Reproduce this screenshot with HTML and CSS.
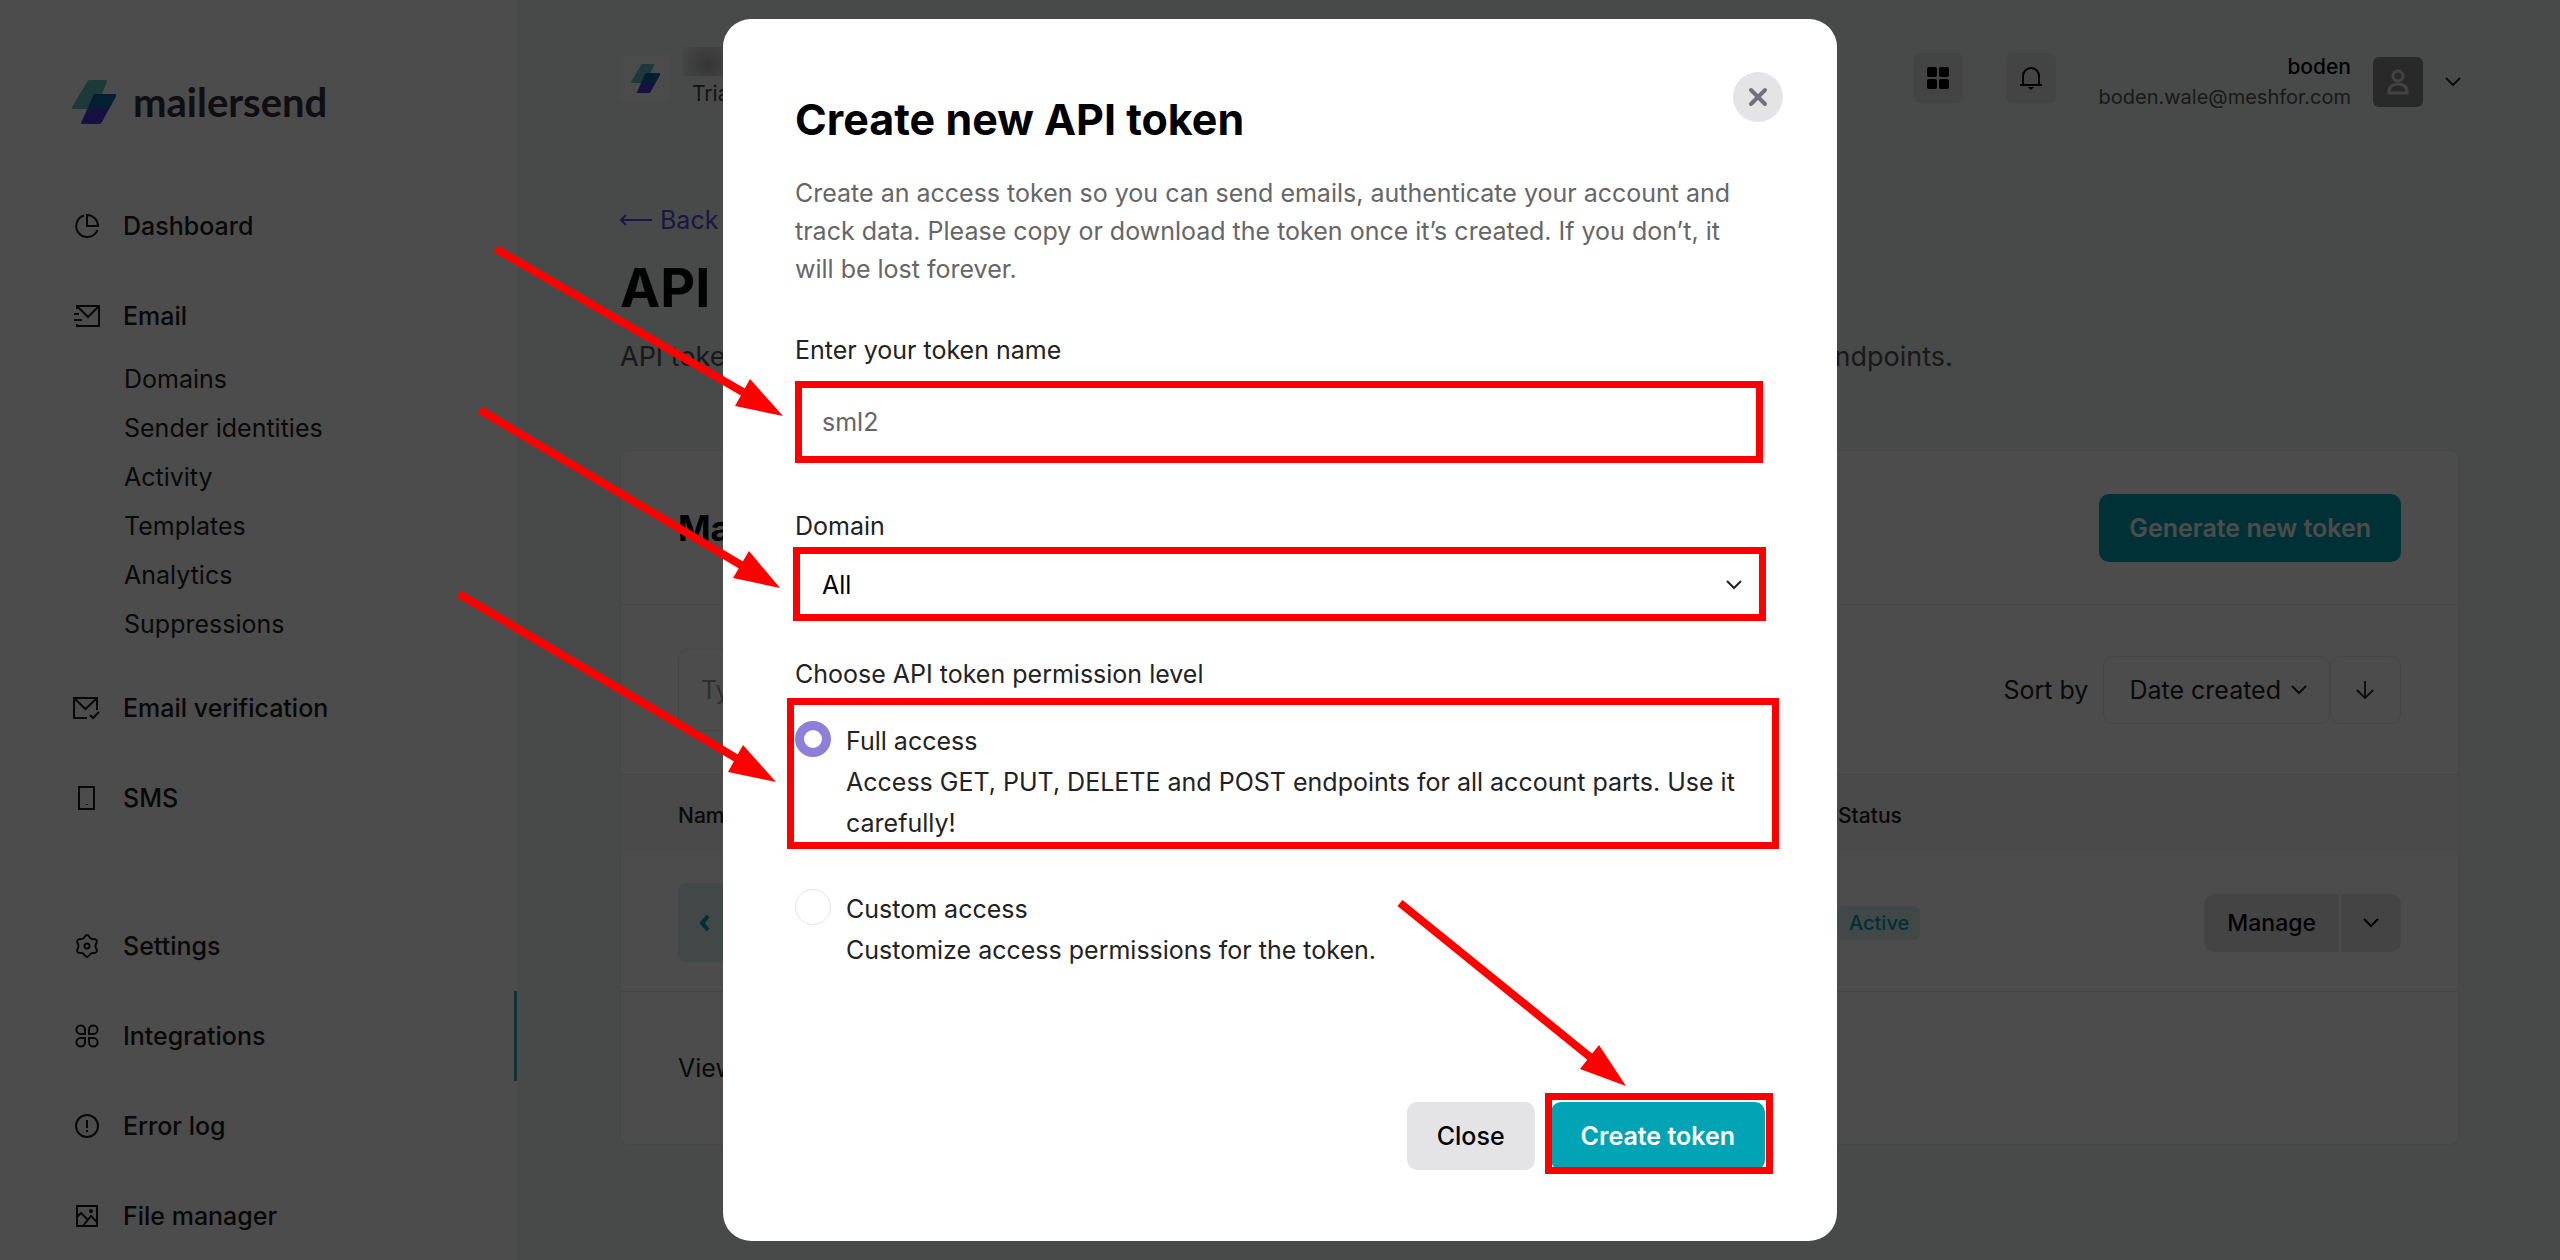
FILE: index.html
```html
<!DOCTYPE html>
<html lang="en">

    <head>

        <meta charset="UTF-8">
        <meta name="viewport" content="width=device-width, initial-scale=1.0">
        <title>API tokens | MailerSend</title>

        <link rel="stylesheet" href="styles.css">

    </head>

    <body>

        <!-- shapes used more than once -->
        <svg class="sprite" aria-hidden="true">
            <symbol id="logo" viewBox="0 0 44 44">
                <path fill="#62c0c4" d="M15 2Q16 0 18 0H34Q35 0 35 2L23 29H1Q0 29 0 27Z" />
                <path fill="#4a3adb" d="M9 43L22 14H43Q44 14 44 16L30 42Q29 44 27 44H10Q9 44 9 43Z" />
                <path fill="#0f69a8" d="M16 29L22 16Q23 14 25 14H43Q44 14 44 16L37 29Z" />
            </symbol>
            <symbol id="chevron" viewBox="0 0 16 10">
                <path d="M1 1l7 7 7-7" fill="none" stroke="currentColor" stroke-width="2" />
            </symbol>
        </svg>

        <div class="app">

            <aside class="sidebar">

                <a class="brand" href="#">
                    <svg class="brand-logo"><use href="#logo" /></svg>
                    <span>mailersend</span>
                </a>

                <nav class="nav">

                    <a class="nav-item" href="#">
                        <svg class="icon" viewBox="0 0 24 24"><path d="M9 1.5A11 11 0 1 0 22.5 16M12 1v11h11A11 11 0 0 0 12 1z" /></svg>
                        Dashboard
                    </a>
                    <a class="nav-item" href="#">
                        <svg class="icon" viewBox="0 0 24 24"><path d="M2 5V2h22v20H2v-2M2 2l11 11L24 2M-1 10h5M-1 16h8" /></svg>
                        Email
                    </a>

                    <div class="subnav">
                        <a href="#">Domains</a>
                        <a href="#">Sender identities</a>
                        <a href="#">Activity</a>
                        <a href="#">Templates</a>
                        <a href="#">Analytics</a>
                        <a href="#">Suppressions</a>
                    </div>

                    <a class="nav-item" href="#">
                        <svg class="icon" viewBox="0 0 24 24"><path d="M22 14V2H-1v20h13M-1 2l11.5 11L22 2M15 19l3 3 6-6" /></svg>
                        Email verification
                    </a>
                    <a class="nav-item" href="#">
                        <svg class="icon" viewBox="0 0 24 24"><path d="M4 1h15v22H4zM12 18v1" /></svg>
                        SMS
                    </a>

                    <a class="nav-item nav-item-split" href="#">
                        <svg class="icon" viewBox="0 0 24 24"><path d="M12 1c2 0 2.5 3 4 3.7s4-.7 5.500 1.3-1 3.5-1 6 2.5 4 1 6-4 .6-5.500 1.3S14 23 12 23s-2.5-3-4-3.7-4 .7-5.500-1.3 1-3.5 1-6-2.5-4-1-6 4-.6 5.500-1.3S10 1 12 1z" /><circle cx="12" cy="12" r="2.5" /></svg>
                        Settings
                    </a>
                    <a class="nav-item active" href="#">
                        <svg class="icon" viewBox="0 0 24 24"><path d="M10 10V5.5A4.300 4.300 0 1 0 5.5 10zM14 10V5.5A4.300 4.300 0 1 1 18.5 10zM10 14v4.5A4.300 4.300 0 1 1 5.5 14zM14 14v4.5a4.300 4.300 0 1 0 4.5-4.5z" /></svg>
                        Integrations
                    </a>
                    <a class="nav-item" href="#">
                        <svg class="icon" viewBox="0 0 24 24"><circle cx="12" cy="12" r="11" /><path d="M12 6v8M12 16v2" /></svg>
                        Error log
                    </a>
                    <a class="nav-item" href="#">
                        <svg class="icon" viewBox="0 0 24 24"><path d="M2 2h20v20H2zM2 13l4-4 7 7M8 22l8-10 6 6" /><circle cx="16" cy="7" r="1" /></svg>
                        File manager
                    </a>

                </nav>

            </aside>

            <main class="content">

                <header class="topbar">

                    <div class="workspace">
                        <span class="workspace-tile"><svg><use href="#logo" /></svg></span>
                        <span class="workspace-plan">Trial plan</span>
                    </div>

                    <button class="square-btn" aria-label="Apps">
                        <svg viewBox="0 0 22 22"><rect width="10" height="10" rx="2" /><rect x="12" width="10" height="10" rx="2" /><rect y="12" width="10" height="10" rx="2" /><rect x="12" y="12" width="10" height="10" rx="2" /></svg>
                    </button>
                    <button class="square-btn" aria-label="Notifications">
                        <svg viewBox="0 0 22 22"><path d="M3 18V9a8 8 0 0 1 16 0v9M0 18h22" fill="none" stroke="#000" stroke-width="2" /><path d="M8 20h6l-3 3z" /></svg>
                    </button>

                    <div class="account">
                        <div class="user">
                            <span class="user-name">boden</span>
                            <span class="user-mail">boden.wale@meshfor.com</span>
                        </div>
                        <button class="avatar" aria-label="Account">
                            <svg viewBox="0 0 22 26"><circle cx="11" cy="7" r="5" /><path d="M2 24v-2a9 7 0 0 1 18 0v2z" /></svg>
                        </button>
                        <svg class="chevron"><use href="#chevron" /></svg>
                    </div>

                </header>

                <a class="back" href="#">
                    <svg viewBox="0 0 32 12"><path d="M6 1L1 6l5 5M1 6h31" /></svg>
                    Back
                </a>

                <h1>API tokens</h1>
                <p class="lead">API tokens are used to authenticate your account and allow you to access the MailerSend API endpoints.</p>

                <section class="card">

                    <div class="card-head">
                        <h2>Manage tokens</h2>
                        <button class="btn btn-primary">Generate new token</button>
                    </div>

                    <div class="card-filter">
                        <input class="search" type="text" placeholder="Type to search" aria-label="Search">
                        <span class="sort-label">Sort by</span>
                        <button class="sort-btn">Date created <svg class="chevron"><use href="#chevron" /></svg></button>
                        <button class="sort-btn sort-dir" aria-label="Descending">
                            <svg viewBox="0 0 20 20"><path d="M10 0v18M1 10l9 9 9-9" /></svg>
                        </button>
                    </div>

                    <table class="tokens">
                        <thead>
                            <tr>
                                <th class="col-name">Name</th>
                                <th>Status</th>
                                <th></th>
                            </tr>
                        </thead>
                        <tbody>
                            <tr>
                                <td>
                                    <span class="token-tile"><svg viewBox="0 0 36 16"><path d="M8 1L2 8l6 7M28 1l6 7-6 7" /></svg></span>
                                </td>
                                <td><span class="badge">Active</span></td>
                                <td>
                                    <div class="manage">
                                        <button>Manage</button>
                                        <button class="manage-more" aria-label="More"><svg class="chevron"><use href="#chevron" /></svg></button>
                                    </div>
                                </td>
                            </tr>
                        </tbody>
                    </table>

                    <p class="card-foot">View the API docs</p>

                </section>

            </main>

        </div>

        <div class="overlay">

            <span class="name-mask"></span>

            <form class="modal" role="dialog" aria-labelledby="modal-title">

                <button class="modal-close" type="button" aria-label="Close dialog">
                    <svg viewBox="0 0 18 18"><path d="M2 2l14 14M16 2L2 16" /></svg>
                </button>

                <h2 class="modal-title" id="modal-title">Create new API token</h2>
                <p class="modal-text">Create an access token so you can send emails, authenticate your account and track data. Please copy or download the token once it’s created. If you don’t, it will be lost forever.</p>

                <label class="field-label" for="token-name">Enter your token name</label>
                <input class="field field-name" id="token-name" type="text" value="sml2">

                <label class="field-label" for="domain">Domain</label>
                <div class="select-wrap">
                    <select class="field field-domain" id="domain">
                        <option>All</option>
                    </select>
                    <svg class="chevron"><use href="#chevron" /></svg>
                </div>

                <fieldset class="levels">
                    <legend class="field-label">Choose API token permission level</legend>
                    <label class="level">
                        <input type="radio" name="level" checked>
                        <span>Full access<br>Access GET, PUT, DELETE and POST endpoints for all account parts. Use it carefully!</span>
                    </label>
                    <label class="level">
                        <input type="radio" name="level">
                        <span>Custom access<br>Customize access permissions for the token.</span>
                    </label>
                </fieldset>

                <div class="modal-actions">
                    <button class="btn btn-grey" type="button">Close</button>
                    <button class="btn btn-primary" type="submit">Create token</button>
                </div>

                <!-- walkthrough marks -->
                <svg class="marks" viewBox="0 0 1114 1222" aria-hidden="true">
                    <g fill="none" stroke="#f00" stroke-width="7">
                        <rect x="75.5" y="365.5" width="961" height="75" />
                        <rect x="73.5" y="531.5" width="966" height="67" />
                        <rect x="67.5" y="682.5" width="985" height="144" />
                        <rect x="825.5" y="1077.5" width="221" height="74" />
                    </g>
                    <path fill="none" stroke="#f00" stroke-width="8" d="M-227 230L25 376M-243 391L23 549M-264 575L18 742M677 884L872 1042" />
                    <path fill="#f00" d="M60 397L27 360 12 387zM57 569L26 532 10 559zM53 763L20 726 5 753zM903 1067L876 1026 857 1050z" />
                </svg>

            </form>

        </div>

    </body>

</html>
```
FILE: styles.css
```css
*
    {
        margin: 0;
        padding: 0;
        box-sizing: border-box;
    }

body
    {
        font-family: 'Inter', 'Liberation Sans', sans-serif;
        font-size: 25px;
        color: #222;
        background-color: #fff;
    }

a
    {
        color: inherit;
        text-decoration: none;
    }

button, input, select
    {
        font: inherit;
        color: inherit;
        border: none;
        background: none;
    }

button
    {
        cursor: pointer;
    }

svg
    {
        display: block;
        overflow: visible;
        flex-shrink: 0;
    }

.sprite
    {
        position: absolute;
        width: 0;
        height: 0;
    }

.chevron
    {
        width: 16px;
        height: 10px;
    }

.app
    {
        display: flex;
        height: 100vh;
        overflow: hidden;
    }

/* sidebar */

.sidebar
    {
        width: 517px;
        flex-shrink: 0;
        padding-top: 80px;
        background-color: #fdfdfd;
    }

.brand
    {
        display: flex;
        align-items: center;
        gap: 17px;
        height: 44px;
        margin-bottom: 57px;
        padding-left: 72px;
        font-family: 'Lato', sans-serif;
        font-size: 40px;
        font-weight: 700;
        color: #32303c;
    }

.brand-logo
    {
        width: 44px;
        height: 44px;
    }

.nav-item
    {
        display: flex;
        align-items: center;
        gap: 24px;
        height: 90px;
        padding-left: 75px;
        color: #1c1c1c;
        font-weight: 500;
    }

.nav-item-split
    {
        margin-top: 58px;
    }

.nav-item.active
    {
        border-right: 3px solid #2fb0bc;
    }

.icon
    {
        width: 24px;
        height: 24px;
        fill: none;
        stroke: currentColor;
        stroke-width: 2;
    }

.subnav
    {
        display: flex;
        flex-direction: column;
        margin-top: -6px;
        padding: 0 0 14px 124px;
    }

.subnav a
    {
        line-height: 49px;
    }

/* page */

.content
    {
        flex: 1;
        padding: 46px 101px 0 103px;
        background-color: #f1f6f3;
    }

.topbar
    {
        display: flex;
        align-items: center;
        height: 64px;
        margin-right: -2px;
    }

.workspace
    {
        display: flex;
        align-items: center;
        gap: 22px;
        margin-right: auto;
        font-size: 21px;
        color: #444;
    }

.workspace-tile
    {
        display: grid;
        place-items: center;
        width: 50px;
        height: 50px;
        border-radius: 6px;
        background-color: #fafafa;
    }

.workspace-tile svg
    {
        width: 29px;
        height: 29px;
    }

.workspace-plan
    {
        padding-top: 30px;
    }

.square-btn
    {
        display: grid;
        place-items: center;
        width: 50px;
        height: 50px;
        margin-right: 43px;
        border-radius: 6px;
        background-color: #e4e4e5;
    }

.square-btn svg
    {
        width: 22px;
        height: 22px;
    }

.account
    {
        display: flex;
        align-items: center;
        gap: 22px;
        padding-top: 8px;
    }

.user
    {
        display: flex;
        flex-direction: column;
        align-items: flex-end;
        font-size: 20px;
        line-height: 30px;
    }

.user-name
    {
        font-size: 21px;
        font-weight: 500;
        color: #000;
    }

.user-mail
    {
        color: #555;
    }

.avatar
    {
        display: grid;
        place-items: center;
        width: 50px;
        height: 50px;
        border-radius: 6px;
        background-color: #8a8a8c;
    }

.avatar svg
    {
        width: 22px;
        height: 26px;
        fill: none;
        stroke: #e0e0e0;
        stroke-width: 3;
    }

.back
    {
        display: flex;
        align-items: center;
        gap: 8px;
        margin-top: 90px;
        line-height: 40px;
        color: #5d4ae0;
    }

.back svg
    {
        width: 32px;
        height: 12px;
        fill: none;
        stroke: currentColor;
        stroke-width: 2;
    }

h1
    {
        margin-top: 15px;
        font-size: 54px;
        line-height: 66px;
        color: #000;
    }

.lead
    {
        margin-top: 16px;
        font-size: 27px;
        line-height: 40px;
        white-space: nowrap;
        color: #555;
    }

.card
    {
        margin-top: 73px;
        border: 1px solid #e6e9e8;
        border-radius: 8px;
        background-color: #fff;
    }

.card-head, .card-filter
    {
        display: flex;
        align-items: center;
        padding: 0 57px;
        border-bottom: 1px solid #e4e7e6;
    }

.card-head
    {
        justify-content: space-between;
        height: 154px;
    }

.card-head h2
    {
        font-size: 35px;
        color: #000;
    }

.card-filter
    {
        height: 170px;
    }

.search
    {
        width: 500px;
        height: 82px;
        margin-right: auto;
        padding-left: 22px;
        border: 1px solid #e4e7e6;
        border-radius: 10px;
    }

.search::placeholder
    {
        color: #999;
    }

.sort-label
    {
        margin-right: 15px;
    }

.sort-btn
    {
        display: flex;
        align-items: center;
        gap: 10px;
        height: 68px;
        padding: 0 22px 0 25px;
        border: 1px solid #e4e7e6;
        border-radius: 10px;
    }

.sort-dir
    {
        width: 71px;
    }

.sort-dir svg
    {
        width: 18px;
        height: 18px;
        fill: none;
        stroke: currentColor;
        stroke-width: 2;
    }

.tokens
    {
        width: 100%;
        table-layout: fixed;
        border-collapse: collapse;
    }

.tokens th
    {
        width: 310px;
        height: 80px;
        font-size: 21px;
        font-weight: 500;
        text-align: left;
        background-color: #f4f8f6;
    }

.tokens td
    {
        height: 136px;
        border-bottom: 1px solid #e4e7e6;
    }

.tokens .col-name
    {
        width: auto;
    }

.tokens tr > :first-child
    {
        padding-left: 57px;
    }

.tokens tr > :last-child
    {
        padding-right: 57px;
    }

.token-tile
    {
        display: grid;
        place-items: center;
        width: 80px;
        height: 79px;
        border-radius: 8px;
        background-color: #d9f0ee;
    }

.token-tile svg
    {
        width: 36px;
        height: 16px;
        fill: none;
        stroke: #00a2b1;
        stroke-width: 4;
    }

.badge
    {
        display: inline-block;
        padding: 0 11px;
        border-radius: 6px;
        font-size: 20px;
        font-weight: 500;
        line-height: 34px;
        color: #00a2b1;
        background-color: #d9f0ee;
    }

.manage
    {
        display: flex;
        justify-content: flex-end;
        gap: 2px;
    }

.manage button
    {
        height: 58px;
        padding: 0 23px;
        border-radius: 10px 0 0 10px;
        font-size: 23px;
        font-weight: 500;
        color: #000;
        background-color: #e4e4e5;
    }

.manage .manage-more
    {
        padding: 0 22px;
        border-radius: 0 10px 10px 0;
    }

.card-foot
    {
        padding: 0 57px;
        line-height: 152px;
    }

.btn
    {
        height: 68px;
        padding: 0 30px;
        border-radius: 10px;
        font-size: 25px;
        font-weight: 500;
    }

.btn-primary
    {
        font-weight: 600;
        color: #fff;
        background-color: #00a4b4;
    }

.btn-grey
    {
        color: #000;
        background-color: #e4e4e6;
    }

/* modal */

.overlay
    {
        position: fixed;
        inset: 0;
        display: flex;
        align-items: center;
        justify-content: center;
        background-color: rgba(0, 0, 0, 0.7);
    }

.name-mask
    {
        position: absolute;
        top: 47px;
        left: 683px;
        width: 41px;
        height: 29px;
        background: radial-gradient(circle at 60% 60%, #363636, #464646 90%);
    }

.modal
    {
        position: relative;
        width: 1114px;
        max-width: 100%;
        padding: 75px 72px 71px;
        border-radius: 28px;
        background-color: #fff;
    }

.modal-close
    {
        position: absolute;
        top: 53px;
        right: 54px;
        display: grid;
        place-items: center;
        width: 50px;
        height: 50px;
        border-radius: 50%;
        background-color: #e4e4e6;
    }

.modal-close svg
    {
        width: 18px;
        height: 18px;
        stroke: #71717a;
        stroke-width: 4;
        stroke-linecap: round;
    }

.modal-title
    {
        font-size: 43px;
        line-height: 50px;
        color: #000;
    }

.modal-text
    {
        margin: 30px 0 44px;
        line-height: 38px;
        color: #666;
    }

.field-label
    {
        display: block;
        line-height: 36px;
    }

.field
    {
        width: 100%;
        padding: 0 26px;
        border: 1px solid #e4e4e6;
        border-radius: 10px;
    }

.field-name
    {
        height: 82px;
        margin: 13px 0 45px;
        color: #666;
    }

.field-domain
    {
        height: 72px;
        color: #000;
        appearance: none;
    }

.select-wrap
    {
        display: flex;
        align-items: center;
        margin: 5px 0 35px;
    }

.select-wrap .chevron
    {
        margin-left: -39px;
        pointer-events: none;
    }

.levels
    {
        border: none;
    }

.level
    {
        display: flex;
        gap: 15px;
        margin-top: 29px;
        line-height: 41px;
    }

.level + .level
    {
        margin-top: 45px;
    }

.level input
    {
        width: 36px;
        height: 36px;
        flex-shrink: 0;
        border: 1px solid #e4e4e6;
        border-radius: 50%;
        appearance: none;
    }

.level input:checked
    {
        border: 9px solid #8f7fd8;
    }

.modal-actions
    {
        display: flex;
        justify-content: flex-end;
        gap: 16px;
        margin-top: 131px;
    }

.marks
    {
        position: absolute;
        inset: 0;
        width: 100%;
        height: 100%;
        pointer-events: none;
    }
```
